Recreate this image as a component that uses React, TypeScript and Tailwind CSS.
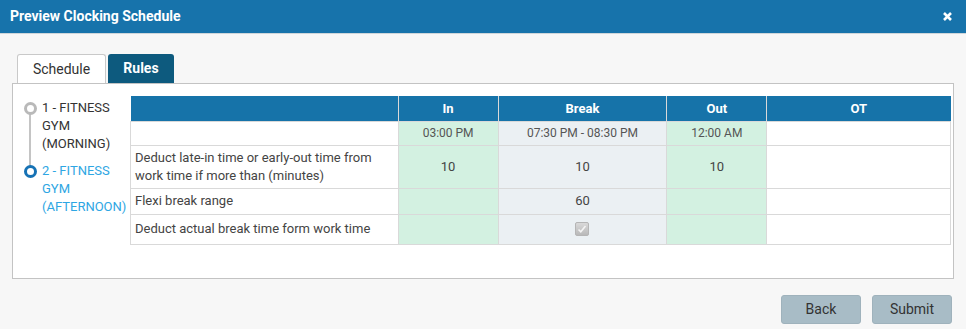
import React from 'react';

const font = { fontFamily: 'Roboto, "Liberation Sans", sans-serif' };

const steps = [
  { label: ['1 - FITNESS', 'GYM', '(MORNING)'], active: false },
  { label: ['2 - FITNESS', 'GYM', '(AFTERNOON)'], active: true },
];

const DisabledCheck = () => (
  <span className="inline-flex h-[14px] w-[14px] items-center justify-center rounded-[2px] border border-[#b5b5b5] bg-gradient-to-b from-[#d9d9d9] to-[#b9b9b9]">
    <svg width="10" height="10" viewBox="0 0 10 10" fill="none" stroke="#f4f4f4" strokeWidth="1.6">
      <path d="M1.5 5.5l2.3 2.3L8.5 2" />
    </svg>
  </span>
);

export default function App() {
  return (
    <div className="flex h-[329px] w-[966px] flex-col bg-[#f7f7f7] text-[13px] text-[#444]" style={font}>
      {/* title bar */}
      <div className="flex h-[34px] items-center justify-between border-b border-[#cfd6da] bg-[#1773ab] pl-[10px] pr-[14px]">
        <span className="text-[14px] font-bold text-white">Preview Clocking Schedule</span>
        <svg width="9" height="9" viewBox="0 0 9 9" stroke="white" strokeWidth="2.6">
          <path d="M1 1l7 7M8 1L1 8" />
        </svg>
      </div>

      {/* tabs */}
      <div className="mt-[20px] flex gap-[2px] pl-[17px]">
        <div className="flex h-[29px] w-[89px] items-center justify-center rounded-t-[3px] border border-b-0 border-[#c9c9c9] bg-white text-[14px] text-[#333]">
          Schedule
        </div>
        <div className="flex h-[29px] w-[66px] items-center justify-center rounded-t-[3px] bg-[#0d5a7e] text-[14px] font-bold text-white">
          Rules
        </div>
      </div>

      {/* panel */}
      <div className="mx-[12px] flex h-[196px] border border-[#c3c3c3] bg-white pt-[12px]">
        <div className="flex w-[117px] shrink-0 flex-col gap-[9px] pl-[11px] pt-[3px]">
          {steps.map((s, i) => (
            <div key={i} className="relative flex gap-[5px]">
              {i === 0 && <div className="absolute left-[5px] top-[12px] h-[60px] w-[2px] bg-[#c4c4c4]" />}
              <div
                className={`relative mt-[3px] h-[13px] w-[13px] shrink-0 rounded-full border-[3px] bg-white ${
                  s.active ? 'border-[#1672b5]' : 'border-[#b9b9b9]'
                }`}
              />
              <div className={`leading-[18px] ${s.active ? 'text-[#2ea6e3]' : 'text-[#333]'}`}>
                {s.label.map((l) => (
                  <div key={l}>{l}</div>
                ))}
              </div>
            </div>
          ))}
        </div>

        <div className="flex-1">
          <table className="w-[821px] border-collapse">
            <colgroup>
              <col className="w-[268px]" />
              <col className="w-[100px]" />
              <col className="w-[169px]" />
              <col className="w-[100px]" />
              <col className="w-[184px]" />
            </colgroup>
            <thead>
              <tr className="h-[25px] bg-[#1673a9] text-[13px] font-bold text-white">
                <th className="border-r border-[#d9d9d9]"></th>
                <th className="border-r border-[#d9d9d9]">In</th>
                <th className="border-r border-[#d9d9d9]">Break</th>
                <th className="border-r border-[#d9d9d9]">Out</th>
                <th>OT</th>
              </tr>
            </thead>
            <tbody className="text-[#444]">
              <tr className="h-[24px] text-[12px] text-[#555]">
                <td className="border border-[#d9d9d9]"></td>
                <td className="border border-[#d9d9d9] bg-[#d3f1e1] text-center">03:00 PM</td>
                <td className="border border-[#d9d9d9] bg-[#ebf0f3] text-center">07:30 PM - 08:30 PM</td>
                <td className="border border-[#d9d9d9] bg-[#d3f1e1] text-center">12:00 AM</td>
                <td className="border border-[#d9d9d9]"></td>
              </tr>
              <tr className="h-[43px]">
                <td className="border border-[#d9d9d9] px-[4px] py-[3px] leading-[18px]">
                  Deduct late-in time or early-out time from work time if more than (minutes)
                </td>
                <td className="border border-[#d9d9d9] bg-[#d3f1e1] text-center">10</td>
                <td className="border border-[#d9d9d9] bg-[#ebf0f3] text-center">10</td>
                <td className="border border-[#d9d9d9] bg-[#d3f1e1] text-center">10</td>
                <td className="border border-[#d9d9d9]"></td>
              </tr>
              <tr className="h-[26px]">
                <td className="border border-[#d9d9d9] px-[4px]">Flexi break range</td>
                <td className="border border-[#d9d9d9] bg-[#d3f1e1]"></td>
                <td className="border border-[#d9d9d9] bg-[#ebf0f3] text-center">60</td>
                <td className="border border-[#d9d9d9] bg-[#d3f1e1]"></td>
                <td className="border border-[#d9d9d9]"></td>
              </tr>
              <tr className="h-[30px]">
                <td className="border border-[#d9d9d9] px-[4px]">Deduct actual break time form work time</td>
                <td className="border border-[#d9d9d9] bg-[#d3f1e1]"></td>
                <td className="border border-[#d9d9d9] bg-[#ebf0f3] text-center">
                  <div className="flex justify-center">
                    <DisabledCheck />
                  </div>
                </td>
                <td className="border border-[#d9d9d9] bg-[#d3f1e1]"></td>
                <td className="border border-[#d9d9d9]"></td>
              </tr>
            </tbody>
          </table>
        </div>
      </div>

      {/* footer buttons */}
      <div className="mt-[16px] flex justify-end gap-[11px] pr-[14px]">
        <button className="h-[29px] w-[80px] rounded-[3px] border border-[#9fb2bc] bg-[#a8bcc6] text-[14px] text-[#333]">
          Back
        </button>
        <button className="h-[29px] w-[80px] rounded-[3px] border border-[#9fb2bc] bg-[#a8bcc6] text-[14px] text-[#333]">
          Submit
        </button>
      </div>
    </div>
  );
}
